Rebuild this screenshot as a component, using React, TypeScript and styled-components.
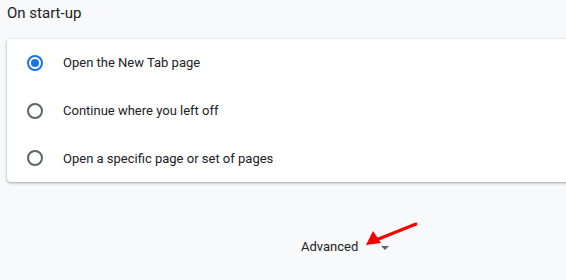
import React from 'react'
import styled, { createGlobalStyle } from 'styled-components'

const GlobalStyle = createGlobalStyle`
  html, body {
    margin: 0;
    padding: 0;
    background: #f8f9fa;
    overflow: hidden;
  }
  body {
    font-family: Roboto, "Liberation Sans", Arial, sans-serif;
    color: #202124;
  }
`

const Page = styled.div`
  position: relative;
  width: 566px;
  height: 280px;
  padding: 0 0 0 7px;
  box-sizing: border-box;
`

const Heading = styled.h2`
  margin: 0;
  padding-top: 3px;
  height: 39px;
  box-sizing: border-box;
  font-size: 15px;
  font-weight: 400;
  line-height: 20px;
  color: #202124;
`

const Card = styled.div`
  width: 580px;
  background: #fff;
  border-radius: 4px;
  box-shadow: 0 1px 2px 0 rgba(60, 64, 67, 0.3), 0 1px 3px 1px rgba(60, 64, 67, 0.15);
  display: flex;
  flex-direction: column;
`

const Row = styled.label`
  height: 47.7px;
  display: flex;
  align-items: center;
  padding-left: 20px;
  gap: 20px;
  font-size: 13px;
  color: #202124;
`

const Radio = styled.span<{ $checked?: boolean }>`
  width: 16px;
  height: 16px;
  box-sizing: border-box;
  border-radius: 50%;
  border: 2px solid ${p => (p.$checked ? '#1a73e8' : '#5f6368')};
  display: flex;
  align-items: center;
  justify-content: center;
  &::after {
    content: '';
    width: 8px;
    height: 8px;
    border-radius: 50%;
    background: #1a73e8;
    display: ${p => (p.$checked ? 'block' : 'none')};
  }
`

const AdvancedRow = styled.div`
  margin-top: 57px;
  padding-left: 294px;
  display: flex;
  align-items: center;
  gap: 23px;
  font-size: 13px;
  color: #202124;
`

const Caret = styled.span`
  width: 0;
  height: 0;
  border-left: 4px solid transparent;
  border-right: 4px solid transparent;
  border-top: 4px solid #5f6368;
  margin-top: 2px;
`

const Annotation = styled.svg`
  position: absolute;
  left: 360px;
  top: 220px;
  overflow: visible;
`

const options = [
  { label: 'Open the New Tab page', checked: true },
  { label: 'Continue where you left off', checked: false },
  { label: 'Open a specific page or set of pages', checked: false },
]

export default function App() {
  return (
    <Page>
      <GlobalStyle />
      <Heading>On start-up</Heading>
      <Card>
        {options.map(o => (
          <Row key={o.label}>
            <Radio $checked={o.checked} />
            {o.label}
          </Row>
        ))}
      </Card>
      <AdvancedRow>
        Advanced
        <Caret />
      </AdvancedRow>
      <Annotation width="60" height="30" viewBox="0 0 60 30">
        <line x1="56" y1="4" x2="16" y2="20" stroke="#f00" strokeWidth="3" strokeLinecap="round" />
        <polygon points="6,25 13,11 21,23" fill="#f00" />
      </Annotation>
    </Page>
  )
}
